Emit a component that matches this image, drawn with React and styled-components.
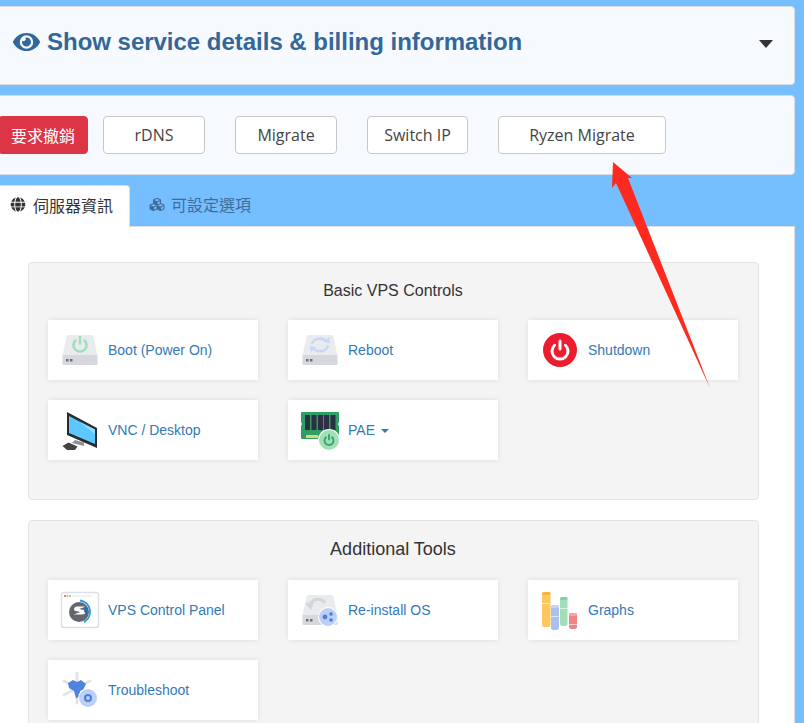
import React from "react";
import styled, { createGlobalStyle } from "styled-components";
import { FaEye, FaGlobe, FaCubes } from "react-icons/fa";

const GlobalStyle = createGlobalStyle`
  html, body {
    margin: 0;
    padding: 0;
    background: #75beff;
    overflow: hidden;
  }
`;

const Page = styled.div`
  position: relative;
  width: 804px;
  height: 723px;
  overflow: hidden;
`;

const Shell = styled.div`
  width: 805px;
  margin-left: -10px;
  padding-top: 6px;
  display: flex;
  flex-direction: column;
`;

const Card = styled.div`
  box-sizing: border-box;
  height: ${(p) => p.$h}px;
  background: #f6faff;
  border: 1px solid #d8dde3;
  border-radius: 4px;
  margin-bottom: ${(p) => p.$mb}px;
  display: flex;
  align-items: center;
`;

const ServiceToggle = styled(Card)`
  justify-content: space-between;
  padding: 0 21px 8px 22px;
`;

const ServiceTitle = styled.h2`
  margin: 0;
  display: flex;
  align-items: center;
  gap: 7px;
  font: bold 24px "Liberation Sans", Arial, sans-serif;
  letter-spacing: -0.02px;
  color: #336699;
  svg {
    width: 27px;
    height: 24px;
  }
`;

const Caret = styled.span`
  width: 0;
  height: 0;
  margin-top: 5px;
  border-left: 7px solid transparent;
  border-right: 7px solid transparent;
  border-top: 8px solid #333;
`;

const ActionBar = styled(Card)`
  padding-left: 7px;
  gap: 30px;
`;

const ActionButton = styled.button`
  box-sizing: border-box;
  width: ${(p) => p.$w}px;
  height: 38px;
  padding: 0;
  border: 1px solid ${(p) => (p.$danger ? "#dc3545" : "#c8c8c8")};
  border-radius: 4px;
  background: ${(p) => (p.$danger ? "#dc3545" : "#fff")};
  color: ${(p) => (p.$danger ? "#fff" : "#444")};
  margin-right: ${(p) => (p.$danger ? -15 : 0)}px;
  font: 16px "Open Sans", "Noto Sans CJK TC", sans-serif;
`;

const Tabs = styled.div`
  display: flex;
  height: 41px;
  padding-left: 4px;
`;

const Tab = styled.div`
  box-sizing: border-box;
  display: flex;
  align-items: center;
  gap: ${(p) => (p.$active ? 7 : 6)}px;
  height: 42px;
  padding: ${(p) => (p.$active ? "0 16px 4px 15px" : "0 19px 4px 19px")};
  background: ${(p) => (p.$active ? "#fff" : "transparent")};
  border: ${(p) => (p.$active ? "1px solid #ddd" : "none")};
  border-bottom: none;
  border-radius: 4px 4px 0 0;
  position: relative;
  z-index: 1;
  color: ${(p) => (p.$active ? "#333" : "#3f6d9a")};
  font: 16px "Noto Sans CJK TC", sans-serif;
  svg {
    width: 16px;
    height: 15px;
  }
`;

const TabBody = styled.div`
  box-sizing: border-box;
  height: 520px;
  padding: 35px 0 0 37px;
  background: #fff;
  border: 1px solid #ddd;
`;

const Panel = styled.section`
  box-sizing: border-box;
  width: 731px;
  margin-bottom: 20px;
  padding: 0 20px 39px 19px;
  background: #f4f4f4;
  border: 1px solid #e3e3e3;
  border-radius: 4px;
`;

const PanelTitle = styled.h3`
  margin: 0;
  padding: ${(p) => p.$top}px 0 ${(p) => p.$bottom}px;
  text-align: center;
  font: normal ${(p) => p.$size}px / 20px "Liberation Sans", Arial, sans-serif;
  color: #333;
`;

const TileGrid = styled.div`
  display: grid;
  grid-template-columns: repeat(3, 210px);
  gap: 20px 30px;
`;

const Tile = styled.a`
  display: flex;
  align-items: center;
  gap: 8px;
  height: 60px;
  padding-left: 12px;
  background: #fff;
  box-shadow: 0 0 5px rgba(0, 0, 0, 0.1);
  font: 14px "Liberation Sans", Arial, sans-serif;
  color: #337ab7;
  svg {
    filter: blur(0.35px);
  }
`;

const TileCaret = styled.span`
  display: inline-block;
  margin-left: 6px;
  vertical-align: middle;
  border-left: 4px solid transparent;
  border-right: 4px solid transparent;
  border-top: 4px solid #337ab7;
`;

const Arrow = styled.svg`
  position: absolute;
  left: 0;
  top: 0;
  pointer-events: none;
`;

const Icon = ({ children }) => (
  <svg width="40" height="40" viewBox="0 0 40 40">
    {children}
  </svg>
);

const Drive = ({ top = "#e9ebee" }) => (
  <>
    <path d="M8.500 5h23a2 2 0 0 1 2 1.500L37.500 26H2.500L6.500 6.500a2 2 0 0 1 2-1.500z" fill={top} />
    <path d="M2.500 25h35v8.500a1.500 1.500 0 0 1-1.500 1.500H4a1.500 1.500 0 0 1-1.500-1.500z" fill="#d6d8dd" />
    <rect x="6" y="29" width="2.500" height="2.500" fill="#6b6f78" />
    <rect x="10" y="29" width="2.500" height="2.500" fill="#6b6f78" />
  </>
);

const PowerGlyph = ({ cx, cy, r, color, width }) => (
  <g fill="none" stroke={color} strokeWidth={width} strokeLinecap="round">
    <path
      d={`M${cx - r * 0.68} ${cy - r * 0.72}a${r} ${r} 0 1 0 ${r * 1.36} 0`}
    />
    <path d={`M${cx} ${cy - r * 1.25}v${r}`} />
  </g>
);

const BootIcon = () => (
  <Icon>
    <Drive />
    <PowerGlyph cx={20} cy={15} r={6.500} color="#9fe0b8" width={2.500} />
  </Icon>
);

const RebootIcon = () => (
  <Icon>
    <Drive />
    <g fill="none" stroke="#c6d8f5" strokeWidth="2.500">
      <path d="M12 14a8 6.500 0 0 1 14-3" />
      <path d="M28 15a8 6.500 0 0 1-14 4" />
    </g>
    <path d="M24 12l5-5 1 6z" fill="#c6d8f5" />
    <path d="M16 17l-5 5-1-6z" fill="#c6d8f5" />
  </Icon>
);

const ShutdownIcon = () => (
  <Icon>
    <circle cx="20" cy="20" r="17" fill="#ed1c2e" />
    <PowerGlyph cx={20} cy={21} r={8} color="#fff" width={3} />
  </Icon>
);

const VncIcon = () => (
  <Icon>
    <path d="M15 30l9 2.500v3.500l-12-3z" fill="#8d9094" />
    <path d="M2.500 36l6-3.500 9 4-2.500 3.500H7z" fill="#444" />
    <path d="M7 2l30 16v20L7 25z" fill="#2b2b2b" />
    <path d="M9 6l26 13.500v14.500L9 23z" fill="#5cc8ff" />
    <path d="M20 12l15 7.500v5z" fill="#8bdbff" />
  </Icon>
);

const RamIcon = () => (
  <Icon>
    <path d="M2 2h36a1 1 0 0 1 1 1v9l-1 2 1 2v12a1 1 0 0 1-1 1H2a1 1 0 0 1-1-1V16l1-2-1-2V3a1 1 0 0 1 1-1z" fill="#2f9e62" />
    {[5, 11.500, 18, 24, 30.500].map((x) => (
      <rect key={x} x={x} y="5" width="5" height="15" fill="#2b3044" />
    ))}
    <rect x="6" y="25" width="12" height="3" fill="#e4d27a" />
    <circle cx="29" cy="30" r="11" fill="#fff" />
    <circle cx="29" cy="30" r="10" fill="#9fe0b8" />
    <PowerGlyph cx={29} cy={30.500} r={4.500} color="#3aa068" width={1.800} />
  </Icon>
);

const PanelIcon = () => (
  <Icon>
    <rect x="1.500" y="2.500" width="37" height="35" rx="2.500" fill="#fff" stroke="#dcdfe6" strokeWidth="1.500" />
    <rect x="4" y="5" width="2" height="2" fill="#ef7c7c" />
    <rect x="6.500" y="5" width="2" height="2" fill="#f2c66a" />
    <rect x="9" y="5" width="2" height="2" fill="#8ed6a5" />
    <rect x="12" y="5.200" width="20" height="1.600" fill="#eceef2" />
    <circle cx="19" cy="22" r="10" fill="#63666c" />
    <path d="M20 10.500a11.500 11.500 0 0 1 4 21.500" fill="none" stroke="#2e9bdc" strokeWidth="2" />
    <path d="M26 16.500h-9c-3 0-4 3.500-1.500 4.500l5 1-7 2.500h9c3 0 4-3.500 1.500-4.500l-5-1z" fill="#fff" />
    <path d="M25 15.500a9 9 0 0 1 2 8l-3-1.500z" fill="#1f6fb8" />
  </Icon>
);

const ReinstallIcon = () => (
  <Icon>
    <Drive />
    <path d="M10 16a8 7 0 0 1 15-3" fill="none" stroke="#d3d5da" strokeWidth="3" />
    <path d="M5 13l9-1-3 8z" fill="#d3d5da" />
    <circle cx="28" cy="27" r="10" fill="#fff" />
    <circle cx="28" cy="27" r="9" fill="#bcd0f7" />
    <g fill="#4a80dc">
      <circle cx="25" cy="27" r="2.400" />
      <circle cx="31" cy="24" r="1.800" />
      <circle cx="31" cy="30" r="1.800" />
    </g>
  </Icon>
);

const bars = [
  { x: 2, y: 2, h: 35, w: 8.500, fill: "#fcc75f", cap: "#f2b544" },
  { x: 11, y: 15, h: 25, w: 8, fill: "#a9c0f0", cap: "#c4d4f6" },
  { x: 20, y: 7, h: 29, w: 7.500, fill: "#a2dfb8", cap: "#85d0a3" },
  { x: 29, y: 23, h: 16, w: 8, fill: "#ee8585", cap: "#f3a8a8" },
];

const GraphsIcon = () => (
  <Icon>
    {bars.map((b) => (
      <g key={b.x}>
        <rect x={b.x} y={b.y} width={b.w} height={b.h} rx="2.500" fill={b.fill} />
        <rect x={b.x} y={b.y} width={b.w} height="3" rx="1.500" fill={b.cap} />
        <rect x={b.x} y={b.y + 11} width={b.w} height="0.800" fill="#fff" opacity="0.7" />
      </g>
    ))}
  </Icon>
);

const TroubleshootIcon = () => (
  <Icon>
    <g stroke="#e3e4e8" strokeWidth="3" strokeLinecap="round">
      <path d="M17 3v30" />
      <path d="M4 11l26 14" />
      <path d="M4 25l26-14" />
    </g>
    <path d="M8 13l5-3 4 2 4-2 5 4-3 6-3 1 1 6-5 1-2-7-5-3z" fill="#4e84e0" />
    <circle cx="28" cy="28" r="10" fill="#fff" />
    <circle cx="28" cy="28" r="9" fill="#bcd0f7" />
    <circle cx="28" cy="28" r="3" fill="none" stroke="#4a80dc" strokeWidth="2" />
  </Icon>
);

const basicControls = [
  { label: "Boot (Power On)", icon: <BootIcon /> },
  { label: "Reboot", icon: <RebootIcon /> },
  { label: "Shutdown", icon: <ShutdownIcon /> },
  { label: "VNC / Desktop", icon: <VncIcon /> },
  { label: "PAE", icon: <RamIcon />, caret: true },
];

const additionalTools = [
  { label: "VPS Control Panel", icon: <PanelIcon /> },
  { label: "Re-install OS", icon: <ReinstallIcon /> },
  { label: "Graphs", icon: <GraphsIcon /> },
  { label: "Troubleshoot", icon: <TroubleshootIcon /> },
];

const actions = [
  { label: "要求撤銷", w: 90, danger: true },
  { label: "rDNS", w: 102 },
  { label: "Migrate", w: 102 },
  { label: "Switch IP", w: 101 },
  { label: "Ryzen Migrate", w: 168 },
];

const TileSection = ({ title, size, top, bottom, tiles }) => (
  <Panel>
    <PanelTitle $size={size} $top={top} $bottom={bottom}>
      {title}
    </PanelTitle>
    <TileGrid>
      {tiles.map((t) => (
        <Tile key={t.label}>
          {t.icon}
          <span>
            {t.label}
            {t.caret && <TileCaret />}
          </span>
        </Tile>
      ))}
    </TileGrid>
  </Panel>
);

const App = () => {
  return (
    <Page>
      <GlobalStyle />
      <Shell>
        <ServiceToggle $h={79} $mb={10}>
          <ServiceTitle>
            <FaEye />
            Show service details &amp; billing information
          </ServiceTitle>
          <Caret />
        </ServiceToggle>
        <ActionBar $h={80} $mb={10}>
          {actions.map((a) => (
            <ActionButton key={a.label} $w={a.w} $danger={a.danger}>
              {a.label}
            </ActionButton>
          ))}
        </ActionBar>
        <Tabs>
          <Tab $active>
            <FaGlobe />
            伺服器資訊
          </Tab>
          <Tab>
            <FaCubes />
            可設定選項
          </Tab>
        </Tabs>
        <TabBody>
          <TileSection title="Basic VPS Controls" size={16} top={18} bottom={19} tiles={basicControls} />
          <TileSection title="Additional Tools" size={18} top={18} bottom={21} tiles={additionalTools} />
        </TabBody>
      </Shell>
      <Arrow width="804" height="723" viewBox="0 0 804 723">
        <polygon points="613,162 632,178 628,178 710,388 616,183 612,188" fill="#ff2a1f" />
      </Arrow>
    </Page>
  );
};

export default App;
